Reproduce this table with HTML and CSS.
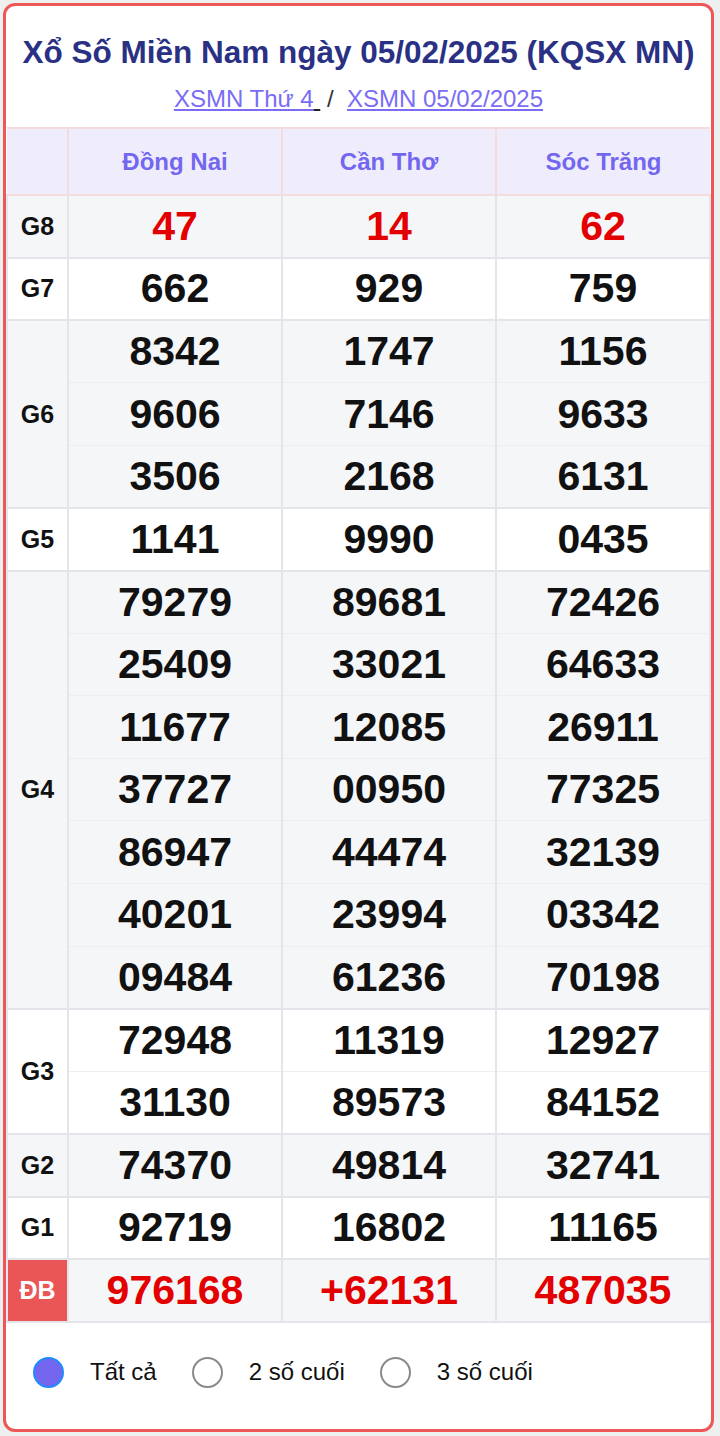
FILE: index.html
```html
<!DOCTYPE html>
<html lang="vi">
<head>
<meta charset="utf-8">
<title>XSMN 05/02/2025</title>
<link rel="stylesheet" href="styles.css">
</head>
<body>
<div class="card">
  <h1 class="title">Xổ Số Miền Nam ngày 05/02/2025 (KQSX MN)</h1>
  <div class="links"><a href="#">XSMN Thứ 4</a><u class="sp">&nbsp;</u>&nbsp;/&nbsp;&nbsp;<a href="#">XSMN 05/02/2025</a></div>
  <table class="kq">
    <thead>
      <tr><th class="lbl"></th><th>Đồng Nai</th><th>Cần Thơ</th><th>Sóc Trăng</th></tr>
    </thead>
    <tbody>
      <tr class="g alt end"><td class="lbl">G8</td><td class="red">47</td><td class="red">14</td><td class="red">62</td></tr>
      <tr class="g end"><td class="lbl">G7</td><td>662</td><td>929</td><td>759</td></tr>
      <tr class="g alt"><td class="lbl" rowspan="3">G6</td><td>8342</td><td>1747</td><td>1156</td></tr>
      <tr class="g alt"><td>9606</td><td>7146</td><td>9633</td></tr>
      <tr class="g alt end"><td>3506</td><td>2168</td><td>6131</td></tr>
      <tr class="g end"><td class="lbl">G5</td><td>1141</td><td>9990</td><td>0435</td></tr>
      <tr class="g alt"><td class="lbl" rowspan="7">G4</td><td>79279</td><td>89681</td><td>72426</td></tr>
      <tr class="g alt"><td>25409</td><td>33021</td><td>64633</td></tr>
      <tr class="g alt"><td>11677</td><td>12085</td><td>26911</td></tr>
      <tr class="g alt"><td>37727</td><td>00950</td><td>77325</td></tr>
      <tr class="g alt"><td>86947</td><td>44474</td><td>32139</td></tr>
      <tr class="g alt"><td>40201</td><td>23994</td><td>03342</td></tr>
      <tr class="g alt end"><td>09484</td><td>61236</td><td>70198</td></tr>
      <tr class="g"><td class="lbl" rowspan="2">G3</td><td>72948</td><td>11319</td><td>12927</td></tr>
      <tr class="g end"><td>31130</td><td>89573</td><td>84152</td></tr>
      <tr class="g alt end"><td class="lbl">G2</td><td>74370</td><td>49814</td><td>32741</td></tr>
      <tr class="g end"><td class="lbl">G1</td><td>92719</td><td>16802</td><td>11165</td></tr>
      <tr class="g alt end"><td class="lbl db">ĐB</td><td class="red">976168</td><td class="red">+62131</td><td class="red">487035</td></tr>
    </tbody>
  </table>
  <div class="radios">
    <label class="opt"><span class="dot on"></span><span class="txt">Tất cả</span></label>
    <label class="opt"><span class="dot"></span><span class="txt">2 số cuối</span></label>
    <label class="opt"><span class="dot"></span><span class="txt">3 số cuối</span></label>
  </div>
</div>
</body>
</html>
```

FILE: styles.css
```css
html, body {
  margin: 0;
  padding: 0;
}
body {
  background: #eef0ef;
  font-family: "Liberation Sans", Arial, sans-serif;
  color: #111;
}
.card {
  margin: 3px 6px 3px 3px;
  height: 1423px;
  border: 3px solid #ee5757;
  border-radius: 12px;
  background: #fff;
  overflow: hidden;
}
.title {
  margin: 28px 0 0;
  font-size: 31.5px;
  line-height: 36px;
  font-weight: bold;
  color: #2a3184;
  text-align: center;
}
.links {
  margin-top: 15px;
  font-size: 24px;
  line-height: 28px;
  text-align: center;
  color: #333;
}
.links a {
  color: #7a6cf4;
  text-decoration: underline;
}
.links .sp {
  text-decoration: underline;
  color: #222;
}
.kq {
  margin-top: 14px;
  width: 100%;
  border-collapse: collapse;
  table-layout: fixed;
}
.kq th, .kq td {
  padding: 0;
  text-align: center;
  vertical-align: middle;
}
.kq th {
  height: 65px;
  background: #efedfc;
  color: #7367f0;
  font-size: 24px;
  font-weight: bold;
  border: 2px solid #f5dcdc;
}
.kq th.lbl, .kq td.lbl {
  width: 60px;
}
.kq th:first-child, .kq td.lbl {
  border-left: none;
}
.kq th:last-child, .kq tr td:last-child {
  border-right: none;
}
.kq tr.g {
  height: 62.6px;
}
.kq tr.g td {
  font-size: 41px;
  font-weight: bold;
  border-left: 2px solid #e3e5ea;
  border-right: 2px solid #e3e5ea;
  border-top: 1px solid #eceef2;
}
.kq tr.g.end td {
  border-bottom: 2px solid #e3e5ea;
}
.kq tr.g td.lbl {
  font-size: 25px;
  border-bottom: 2px solid #e3e5ea;
}
.kq tr.alt td {
  background: #f5f6f8;
}
.kq td.red {
  color: #e30000;
}
.kq tr.alt td.db {
  background: #ea5656;
  color: #fff;
}
.radios {
  display: flex;
  align-items: center;
  padding: 34px 0 0 27px;
}
.opt {
  display: flex;
  align-items: center;
  margin-right: 35px;
}
.dot {
  box-sizing: border-box;
  width: 31px;
  height: 31px;
  border-radius: 50%;
  border: 2.5px solid #8a8a8a;
  background: #fff;
}
.dot.on {
  border-color: #1f8bff;
  background: #7466ee;
}
.txt {
  margin-left: 26px;
  font-size: 24px;
  color: #111;
}
```
